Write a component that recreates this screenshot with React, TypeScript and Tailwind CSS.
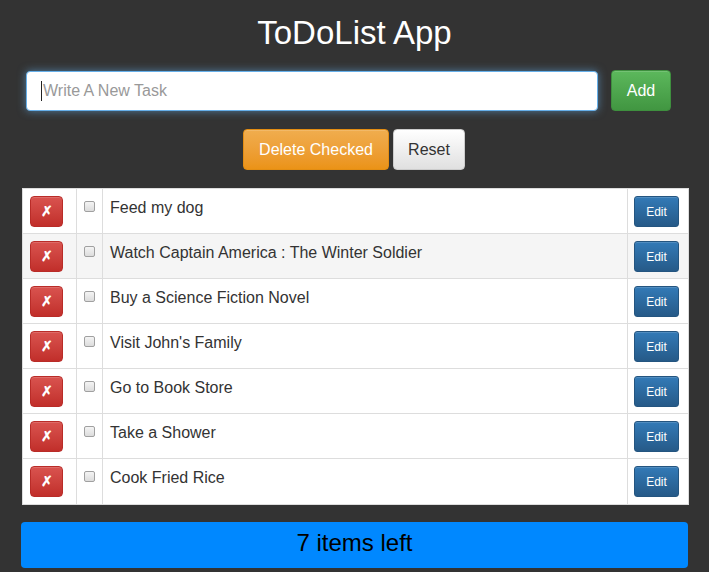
import React from 'react';

const tasks = [
  'Feed my dog',
  'Watch Captain America : The Winter Soldier',
  'Buy a Science Fiction Novel',
  "Visit John's Family",
  'Go to Book Store',
  'Take a Shower',
  'Cook Fried Rice',
];

const TaskRow: React.FC<{ text: string; hover?: boolean; last?: boolean }> = ({ text, hover, last }) => (
  <div
    className={`flex h-[45px] ${last ? '' : 'border-b border-[#ddd]'} ${hover ? 'bg-[#f5f5f5]' : 'bg-white'}`}
  >
    <div className="w-[54px] border-r border-[#ddd] pl-[7px] pt-[7px]">
      <button className="flex h-[31px] w-[33px] items-center justify-center rounded-[4px] border border-[#b92c28] bg-gradient-to-b from-[#d9534f] to-[#c12e2a] text-[14px] font-bold text-white shadow-[inset_0_1px_0_rgba(255,255,255,0.15)]">
        ✗
      </button>
    </div>
    <div className="w-[26px] border-r border-[#ddd] pl-[7px] pt-[12px]">
      <div className="h-[11px] w-[11px] rounded-[2px] border border-[#a0a0a0] bg-gradient-to-b from-[#f4f4f4] to-[#dcdcdc]" />
    </div>
    <div className="flex-1 border-r border-[#ddd] pl-[7px] pt-[8px] text-[16px] leading-[22px] text-[#333]">
      {text}
    </div>
    <div className="w-[60px] pl-[6px] pt-[7px]">
      <button className="flex h-[31px] w-[45px] items-center justify-center rounded-[3px] border border-[#245580] bg-gradient-to-b from-[#337ab7] to-[#265a88] text-[12px] text-white shadow-[inset_0_1px_0_rgba(255,255,255,0.15)]">
        Edit
      </button>
    </div>
  </div>
);

export default function App() {
  return (
    <div
      className="h-[572px] w-[709px] overflow-hidden bg-[#333333]"
      style={{ fontFamily: '"Liberation Sans", Arial, sans-serif' }}
    >
      <h1 className="pt-[13px] text-center text-[33px] leading-[40px] text-white">ToDoList App</h1>

      <div className="mt-[17px] flex items-center pl-[26px]">
        <div className="flex h-[40px] w-[572px] items-center rounded-[4px] border border-[#66afe9] bg-white pl-[14px] text-[16px] text-[#999] shadow-[0_0_8px_rgba(102,175,233,0.6)]">
          <span className="mr-[1px] h-[20px] w-px bg-[#222]" />
          Write A New Task
        </div>
        <button className="ml-[13px] flex h-[41px] w-[60px] items-center justify-center rounded-[4px] border border-[#3e8f3e] bg-gradient-to-b from-[#5cb85c] to-[#419641] text-[16px] text-white shadow-[inset_0_1px_0_rgba(255,255,255,0.15)]">
          Add
        </button>
      </div>

      <div className="mt-[18px] flex justify-center gap-[4px] pr-[1px]">
        <button className="flex h-[41px] w-[146px] items-center justify-center rounded-[4px] border border-[#e38d13] bg-gradient-to-b from-[#f0ad4e] to-[#eb9316] text-[16px] text-white shadow-[inset_0_1px_0_rgba(255,255,255,0.15)]">
          Delete Checked
        </button>
        <button className="flex h-[41px] w-[72px] items-center justify-center rounded-[4px] border border-[#ccc] bg-gradient-to-b from-white to-[#e0e0e0] text-[16px] text-[#333]">
          Reset
        </button>
      </div>

      <div className="ml-[22px] mt-[18px] w-[667px] border border-[#ddd] bg-white">
        {tasks.map((t, i) => (
          <TaskRow key={t} text={t} hover={i === 1} last={i === tasks.length - 1} />
        ))}
      </div>

      <div className="ml-[21px] mt-[17px] flex h-[46px] w-[667px] items-center justify-center rounded-[4px] bg-[#0088ff] pb-[5px] text-[24px] text-black">
        7 items left
      </div>
    </div>
  );
}
